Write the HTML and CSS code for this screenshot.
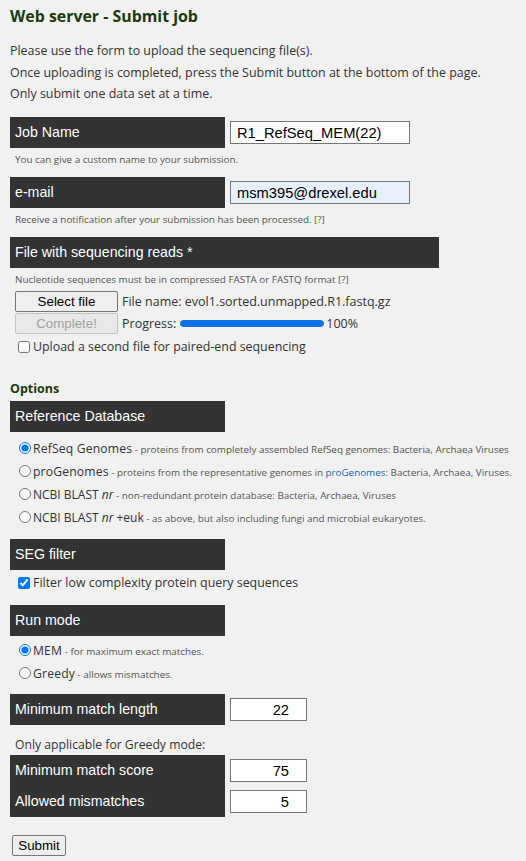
FILE: index.html
```html
<!DOCTYPE html>
<html>
<head>
<meta charset="utf-8">
<link rel="stylesheet" href="styles.css">
</head>
<body>
<h1 class="title">Web server - Submit job</h1>
<p class="intro">Please use the form to upload the sequencing file(s).<br>Once uploading is completed, press the Submit button at the bottom of the page.<br>Only submit one data set at a time.</p>

<div class="field field-job">
  <div class="label">Job Name</div>
  <input class="text-input" type="text" value="R1_RefSeq_MEM(22)">
</div>
<div class="hint">You can give a custom name to your submission.</div>

<div class="field field-email">
  <div class="label">e-mail</div>
  <input class="text-input autofill" type="text" value="msm395@drexel.edu">
</div>
<div class="hint">Receive a notification after your submission has been processed. [?]</div>

<div class="label label-wide">File with sequencing reads *</div>
<div class="hint">Nucleotide sequences must be in compressed FASTA or FASTQ format [?]</div>

<div class="upload-row">
  <button class="btn btn-file" type="button">Select file</button>
  <span class="upload-text">File name: evol1.sorted.unmapped.R1.fastq.gz</span>
</div>
<div class="upload-row">
  <button class="btn btn-file" type="button" disabled>Complete!</button>
  <span class="upload-text">Progress:</span>
  <span class="progress"><span class="progress-fill" style="width:100%"></span></span>
  <span class="upload-text pct">100%</span>
</div>
<label class="check-row check-upload"><input type="checkbox"><span>Upload a second file for paired-end sequencing</span></label>

<h2 class="options">Options</h2>
<div class="label label-ref">Reference Database</div>
<div class="radio-list">
  <label class="radio-row"><input type="radio" name="db" checked><span class="radio-text"><span class="big">RefSeq Genomes</span><span class="desc">&nbsp;- proteins from completely assembled RefSeq genomes: Bacteria, Archaea Viruses</span></span></label>
  <label class="radio-row"><input type="radio" name="db"><span class="radio-text"><span class="big">proGenomes</span><span class="desc">&nbsp;- proteins from the representative genomes in <a class="link">proGenomes</a>: Bacteria, Archaea, Viruses.</span></span></label>
  <label class="radio-row"><input type="radio" name="db"><span class="radio-text"><span class="mid">NCBI BLAST <i>nr</i></span><span class="desc">&nbsp;- non-redundant protein database: Bacteria, Archaea, Viruses</span></span></label>
  <label class="radio-row"><input type="radio" name="db"><span class="radio-text"><span class="mid">NCBI BLAST <i>nr</i> +euk</span><span class="desc">&nbsp;- as above, but also including fungi and microbial eukaryotes.</span></span></label>
</div>

<div class="label label-seg">SEG filter</div>
<label class="check-row check-seg"><input type="checkbox" checked><span>Filter low complexity protein query sequences</span></label>

<div class="label label-run">Run mode</div>
<div class="radio-list radio-list-run">
  <label class="radio-row"><input type="radio" name="mode" checked><span class="radio-text"><span class="big">MEM</span><span class="desc">&nbsp;- for maximum exact matches.</span></span></label>
  <label class="radio-row"><input type="radio" name="mode"><span class="radio-text"><span class="big">Greedy</span><span class="desc">&nbsp;- allows mismatches.</span></span></label>
</div>

<div class="field field-min">
  <div class="label">Minimum match length</div>
  <input class="num-input" type="text" value="22">
</div>
<div class="note">Only applicable for Greedy mode:</div>
<div class="group">
  <div class="field field-tight">
    <div class="label">Minimum match score</div>
    <input class="num-input" type="text" value="75">
  </div>
  <div class="field field-tight">
    <div class="label">Allowed mismatches</div>
    <input class="num-input" type="text" value="5">
  </div>
</div>

<button class="btn btn-submit" type="button">Submit</button>
</body>
</html>
```

FILE: styles.css
```css
html, body {
  margin: 0;
  padding: 0;
  background: #f1f1f1;
}
body {
  padding: 0 10px;
  font-family: "Open Sans", "Noto Sans", sans-serif;
  color: #333;
}
.title {
  margin: 3px 0 0 0;
  font-size: 15.9px;
  line-height: 26px;
  font-weight: 700;
  color: #1d3a0c;
}
.intro {
  margin: 11px 0 0 0;
  font-size: 12.45px;
  line-height: 21.5px;
  color: #333;
}
.field {
  display: flex;
  align-items: center;
  gap: 5px;
}
.field-job { margin-top: 12px; }
.field-email { margin-top: 7px; }
.label {
  box-sizing: border-box;
  width: 215px;
  height: 31px;
  padding-left: 5px;
  display: flex;
  align-items: center;
  flex-shrink: 0;
  background: #333;
  color: #fff;
  font-family: "Liberation Sans", Arial, sans-serif;
  font-size: 14.2px;
}
.label-wide {
  width: 429px;
  margin-top: 7px;
}
.text-input {
  box-sizing: border-box;
  width: 180px;
  height: 23px;
  margin: 0;
  padding: 1px 6px 0;
  border: 1px solid #767676;
  border-radius: 0;
  background: #fff;
  font-family: "Liberation Sans", Arial, sans-serif;
  font-size: 14.7px;
  color: #000;
}
.autofill { background: #e8f0fe; }
.num-input {
  box-sizing: border-box;
  width: 77px;
  height: 23px;
  margin: 0;
  padding: 1px 17px 0 4px;
  border: 1px solid #767676;
  border-radius: 0;
  background: #fff;
  text-align: right;
  font-family: "Liberation Sans", Arial, sans-serif;
  font-size: 14.7px;
  color: #000;
}
.hint {
  padding-left: 5px;
  font-size: 9.85px;
  line-height: 22px;
  color: #555;
}
.upload-row {
  display: flex;
  align-items: center;
  gap: 4px;
  height: 21px;
  margin-top: 1px;
  padding-left: 5px;
}
.btn {
  box-sizing: border-box;
  margin: 0;
  border: 1px solid #767676;
  border-radius: 2px;
  background: #efefef;
  color: #000;
  font-family: "Liberation Sans", Arial, sans-serif;
  font-size: 13.33px;
  padding: 0;
}
.btn-file {
  width: 103px;
  height: 21px;
  line-height: 19px;
}
.btn-file:disabled {
  color: #a0a0a0;
  border-color: #c5c5c5;
  background: #e9e9e9;
}
.upload-text {
  font-size: 12.5px;
  color: #333;
}
.progress {
  display: block;
  width: 144px;
  height: 7px;
  border-radius: 4px;
  background: #e0e0e0;
  overflow: hidden;
}
.progress-fill {
  display: block;
  height: 100%;
  background: #0b6fe6;
  border-radius: 4px;
}
.pct { margin-left: -2px; }
.check-row {
  display: flex;
  align-items: center;
  height: 22px;
  padding-left: 8px;
  font-size: 12.4px;
  color: #333;
}
.check-row input {
  margin: 0 3px 0 0;
  width: 12px;
  height: 12px;
}
.check-upload { margin-top: 2px; }
.options {
  margin: 21px 0 0 0;
  font-size: 12.5px;
  line-height: 20px;
  font-weight: 700;
  color: #1d3a0c;
}
.label-ref { margin-top: 2px; }
.radio-list {
  margin-top: 5px;
  padding-left: 9px;
}
.radio-row {
  display: flex;
  align-items: center;
  height: 23px;
  white-space: nowrap;
}
.radio-row input {
  margin: 0 2px 0 0;
  width: 12px;
  height: 12px;
}
.radio-text {
  line-height: 16px;
}
.big {
  font-size: 12.2px;
  letter-spacing: 0.15px;
  color: #333;
}
.mid {
  font-size: 12px;
  color: #333;
}
.desc {
  font-size: 9.85px;
  color: #555;
}
.link { color: #1a63b8; }
.label-seg { margin-top: 10px; }
.check-seg { margin-top: 2px; }
.label-run { margin-top: 11px; }
.radio-list-run { margin-top: 3px; }
.field-min { margin-top: 9px; }
.note {
  margin-top: 10px;
  padding-left: 5px;
  font-size: 12.2px;
  line-height: 20px;
  color: #333;
}
.group {
  width: 215px;
  background: #333;
}
.group .field { width: 320px; }
.btn-submit {
  display: block;
  margin: 18px 0 0 2px;
  width: 54px;
  height: 21px;
  line-height: 19px;
}
```
